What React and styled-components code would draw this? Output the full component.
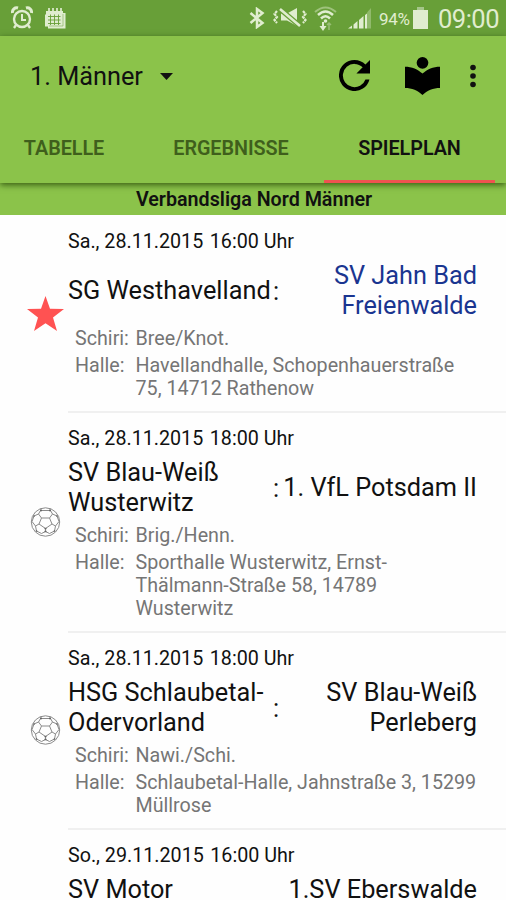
import React from "react";
import styled, { createGlobalStyle } from "styled-components";

const GlobalStyle = createGlobalStyle`
  * { box-sizing: border-box; }
  html, body { margin: 0; padding: 0; overflow: hidden; background: #fefefe; }
  body { font-family: Roboto, sans-serif; color: #111; }
  svg { display: block; flex: none; }
`;

const Screen = styled.main`
  width: 506px;
  height: 900px;
  overflow: hidden;
  display: flex;
  flex-direction: column;
`;

const StatusBar = styled.header`
  flex: none;
  height: 36px;
  padding: 0 7px 0 11px;
  display: flex;
  align-items: center;
  background: #689f38;
  color: #e0edcf;
`;

const StatusIcon = styled.span`
  margin-right: ${(p) => p.$gap}px;
`;

const Battery = styled.span`
  font-size: 17px;
  line-height: 36px;
  letter-spacing: -0.35px;
  padding-top: 2px;
  width: 34px;
  white-space: nowrap;
`;

const Clock = styled.span`
  font-size: 25.5px;
  line-height: 36px;
  letter-spacing: -0.5px;
  padding-top: 2px;
`;

const Spacer = styled.div`
  flex: 1;
`;

const AppBar = styled.div`
  position: relative;
  flex: none;
  height: 147px;
  margin-bottom: -1px;
  background: #8bc34a;
  box-shadow: 0 2px 6px rgba(30, 60, 0, 0.75);
`;

const Toolbar = styled.div`
  height: 79px;
  padding: 0 30px;
  display: flex;
  align-items: center;
`;

const TeamPicker = styled.div`
  display: flex;
  align-items: center;
  gap: 17px;
  font-size: 25.3px;
  padding-top: 2px;
`;

const Action = styled.span`
  margin-left: ${(p) => p.$gap}px;
`;

const Tabs = styled.nav`
  height: 68px;
  padding-right: 11px;
  display: grid;
  grid-template-columns: 128px 196px 1fr;
`;

const Tab = styled.div`
  display: flex;
  justify-content: center;
  padding-top: 22px;
  padding-left: ${(p) => p.$shift || 0}px;
  font-size: 19.8px;
  line-height: 23px;
  font-weight: 600;
  letter-spacing: -0.05px;
  color: ${(p) => (p.$active ? "#111" : "#3f5f1c")};
  border-bottom: 3px solid ${(p) => (p.$active ? "#ef5350" : "transparent")};
`;

const League = styled.h1`
  flex: none;
  margin: 0;
  height: 33px;
  padding: 1px 0 0 2px;
  background: #8bc34a;
  font-size: 19.7px;
  font-weight: 600;
  line-height: 34px;
  text-align: center;
`;

const MatchList = styled.section`
  flex: none;
  padding-top: 1px;
`;

const MatchRow = styled.article`
  display: grid;
  grid-template-columns: 68px 1fr;
  height: ${(p) => p.$height}px;
`;

const Marker = styled.div`
  display: flex;
  align-items: center;
  padding: 0 0 3px 27px;
`;

const MatchBody = styled.div`
  border-bottom: 2px solid #f0f0f0;
  padding: 14px 29px 0 0;
`;

const Kickoff = styled.div`
  display: flex;
  gap: 6.5px;
  font-size: 19.7px;
  line-height: 23px;
  height: 27px;
  white-space: pre;
`;

const Teams = styled.div`
  display: grid;
  grid-template-columns: 203px 10px 1fr;
  align-items: center;
  height: 59px;
  margin-top: 4px;
  margin-bottom: 7px;
  font-size: 25.3px;
  line-height: 29.5px;
`;

const Home = styled.div`
  white-space: pre;
`;

const Versus = styled.div`
  text-align: center;
  padding-top: 3px;
`;

const Guest = styled.div`
  white-space: pre;
  justify-self: end;
  text-align: right;
  color: ${(p) => (p.$own ? "#1a3590" : "inherit")};
`;

const Detail = styled.div`
  display: grid;
  grid-template-columns: 60.5px 1fr;
  padding-left: 7px;
  margin-bottom: 4px;
  font-size: 19.7px;
  line-height: 23px;
  color: #757575;
  white-space: pre;
`;

const AlarmIcon = () => (
  <svg width="22" height="24" viewBox="0 0 22 24" fill="none" stroke="currentColor">
    <circle cx="11" cy="13" r="8" strokeWidth="2.4" />
    <path d="M11 8v6h4" strokeWidth="2" />
    <path d="M1.500 7C1 3.500 4 1 7 2M20.500 7C21 3.500 18 1 15 2" strokeWidth="3" />
    <path d="M5 19l-2 3M17 19l2 3" strokeWidth="2.300" />
  </svg>
);

const CalendarIcon = () => (
  <svg width="22" height="21" viewBox="0 0 22 21" fill="currentColor">
    <path d="M2 3H19V5H21.500V20.500H4V18.500H1V7L2 6z" />
    <path d="M5 0v5M9 0v5M13 0v5M17 0v5" stroke="currentColor" strokeWidth="1.700" />
    <path d="M4 8.500H16.500M4 12H16.500M4 15.500H16.500M6.500 6.500V17M10.500 6.500V17M14.500 6.500V17" stroke="#689f38" strokeWidth=".9" fill="none" />
    <path d="M19 6V18H5" stroke="#689f38" strokeWidth=".5" fill="none" />
  </svg>
);

const BluetoothIcon = () => (
  <svg width="16" height="22" viewBox="0 0 16 22" fill="none" stroke="currentColor" strokeWidth="2.500">
    <path d="M1.500 6l12 10-5.500 4V2l5.500 4-12 10" />
  </svg>
);

const MutedIcon = () => (
  <svg width="34" height="20" viewBox="0 0 34 20" fill="none" stroke="currentColor">
    <path d="M8 5.500h6L24 0v18l-10-5.500H8z" fill="currentColor" stroke="none" />
    <path d="M7 1L27 18" stroke="#689f38" strokeWidth="5" />
    <path d="M7 1L27 18" strokeWidth="2.600" />
    <path d="M4 3L1.500 6 4 9 1.500 12 4 15M30 3l2.500 3L30 9l2.500 3L30 15" strokeWidth="2.200" strokeDasharray="2.800 .7" />
  </svg>
);

const WifiIcon = () => (
  <svg width="23" height="25" viewBox="0 0 23 25" fill="none" stroke="currentColor">
    <path d="M1 6Q11.500-3 22 6" strokeWidth="2" opacity=".45" />
    <path d="M4 9Q11.500 2 19 9M7 12.500Q11.500 8 16 12.500" strokeWidth="2.500" />
    <circle cx="11.500" cy="15" r="1.800" fill="currentColor" stroke="none" />
    <path d="M9 16v5" strokeWidth="2" />
    <path d="M5.500 20h7L9 25z" fill="currentColor" stroke="none" />
    <path d="M15 24v-7M13 19l2-2 2 2" strokeWidth="1.500" opacity=".4" />
  </svg>
);

const SignalIcon = () => (
  <svg width="23" height="21" viewBox="0 0 23 21" fill="currentColor">
    <path d="M0 20.500L4 17.500V20.500zM5.500 16.500L9.500 13V20.500H5.500zM11 12L15.500 8V20.500H11zM17 7L19 5.500V20.500H17z" />
    <path d="M19 4.500L23 0V20.500H19z" opacity=".35" />
  </svg>
);

const BatteryIcon = () => (
  <svg width="15" height="22" viewBox="0 0 15 22" fill="currentColor">
    <path d="M0 3h15v19H0z" />
    <path d="M4 0h7v3H4z" fill="#a5c68a" />
  </svg>
);

const RefreshIcon = () => (
  <svg width="31" height="31" viewBox="4 4 16 16" fill="#000">
    <path d="M17.650 6.350A7.958 7.958 0 0 0 12 4a8 8 0 1 0 7.730 10h-2.080A6 6 0 1 1 12 6c1.660 0 3.140.690 4.220 1.780L13 11h7V4z" />
  </svg>
);

const LibraryIcon = () => (
  <svg width="35" height="38" viewBox="3 2 18 19.550" preserveAspectRatio="none" fill="#000">
    <path d="M12 11.550C9.640 9.350 6.480 8 3 8v11c3.480 0 6.640 1.350 9 3.550 2.360-2.190 5.520-3.550 9-3.550V8c-3.480 0-6.640 1.350-9 3.550z" transform="translate(0 -1)" />
    <circle cx="12" cy="5" r="3" />
  </svg>
);

const MoreIcon = () => (
  <svg width="6" height="24" viewBox="0 0 6 24" fill="#111">
    <circle cx="3" cy="3.500" r="2.800" />
    <circle cx="3" cy="12" r="2.800" />
    <circle cx="3" cy="20.500" r="2.800" />
  </svg>
);

const CaretIcon = () => (
  <svg width="13" height="7" viewBox="0 0 13 7" fill="#111">
    <path d="M0 0h13L6.500 7z" />
  </svg>
);

const StarIcon = () => (
  <svg width="37" height="35" viewBox="0 0 37 35" fill="#ff5252">
    <path d="M18.500 0L23 12.800L37 13L26 21.600L30 35L18.500 27.200L7 35L11 21.600L0 13L14 12.800z" />
  </svg>
);

const BallIcon = () => (
  <svg width="37" height="30" viewBox="-3.500 0 37 30" fill="none" stroke="#8a8a8a" strokeWidth="1">
    <circle cx="15" cy="15" r="14.200" />
    <path d="M11 11h8l2.500 6L15 21.500 8.500 17zM11 11L8 7 10 3.500h10L22 7l-3 4M8 7L3.500 9 1.500 14.500 5 19l3.500-2M22 7l4.500 2 2 5.500L25 19l-3.500-2M5 19l1 5 5 2.500 4-2v-3M25 19l-1 5-5 2.500-4-2M10 3.500L11 1M20 3.500L19 1" />
    <path d="M9.500 3.500h2M18.500 3.500h2M3 9.500l1-1M27 9.500l-1-1M5.500 23.500l1 1M24.500 23.500l-1 1M14 24.500h2M14 21.500h2" stroke="#666" strokeWidth="1.500" />
  </svg>
);

const matches = [
  {
    date: "Sa., 28.11.2015", time: "16:00 Uhr", height: 197, own: true,
    home: "SG Westhavelland", guest: "SV Jahn Bad\nFreienwalde",
    referees: "Bree/Knot.", venue: "Havellandhalle, Schopenhauerstraße\n75, 14712 Rathenow",
  },
  {
    date: "Sa., 28.11.2015", time: "18:00 Uhr", height: 220,
    home: "SV Blau-Weiß\nWusterwitz", guest: "1. VfL Potsdam II",
    referees: "Brig./Henn.", venue: "Sporthalle Wusterwitz, Ernst-\nThälmann-Straße 58, 14789\nWusterwitz",
  },
  {
    date: "Sa., 28.11.2015", time: "18:00 Uhr", height: 197,
    home: "HSG Schlaubetal-\nOdervorland", guest: "SV Blau-Weiß\nPerleberg",
    referees: "Nawi./Schi.", venue: "Schlaubetal-Halle, Jahnstraße 3, 15299\nMüllrose",
  },
  {
    date: "So., 29.11.2015", time: "16:00 Uhr", height: 197, hideMarker: true,
    home: "SV Motor\n ", guest: "1.SV Eberswalde\n ",
  },
];

function Match({ match }) {
  return (
    <MatchRow $height={match.height}>
      <Marker>
        {match.own ? <StarIcon /> : !match.hideMarker && <BallIcon />}
      </Marker>
      <MatchBody>
        <Kickoff><span>{match.date}</span><span>{match.time}</span></Kickoff>
        <Teams>
          <Home>{match.home}</Home>
          <Versus>:</Versus>
          <Guest $own={match.own}>{match.guest}</Guest>
        </Teams>
        {match.referees && (
          <>
            <Detail><span>Schiri:</span><span>{match.referees}</span></Detail>
            <Detail><span>Halle:</span><span>{match.venue}</span></Detail>
          </>
        )}
      </MatchBody>
    </MatchRow>
  );
}

export default function App() {
  return (
    <Screen>
      <GlobalStyle />
      <StatusBar>
        <StatusIcon $gap={11}><AlarmIcon /></StatusIcon>
        <StatusIcon $gap={0}><CalendarIcon /></StatusIcon>
        <Spacer />
        <StatusIcon $gap={8}><BluetoothIcon /></StatusIcon>
        <StatusIcon $gap={7}><MutedIcon /></StatusIcon>
        <StatusIcon $gap={11}><WifiIcon /></StatusIcon>
        <StatusIcon $gap={8}><SignalIcon /></StatusIcon>
        <Battery>94%</Battery>
        <StatusIcon $gap={10}><BatteryIcon /></StatusIcon>
        <Clock>09:00</Clock>
      </StatusBar>
      <AppBar>
        <Toolbar>
          <TeamPicker>1. Männer<CaretIcon /></TeamPicker>
          <Spacer />
          <Action $gap={0}><RefreshIcon /></Action>
          <Action $gap={35}><LibraryIcon /></Action>
          <Action $gap={30}><MoreIcon /></Action>
        </Toolbar>
        <Tabs>
          <Tab>TABELLE</Tab>
          <Tab $shift={10}>ERGEBNISSE</Tab>
          <Tab $active>SPIELPLAN</Tab>
        </Tabs>
      </AppBar>
      <League>Verbandsliga Nord Männer</League>
      <MatchList>
        {matches.map((match, i) => <Match key={i} match={match} />)}
      </MatchList>
    </Screen>
  );
}
